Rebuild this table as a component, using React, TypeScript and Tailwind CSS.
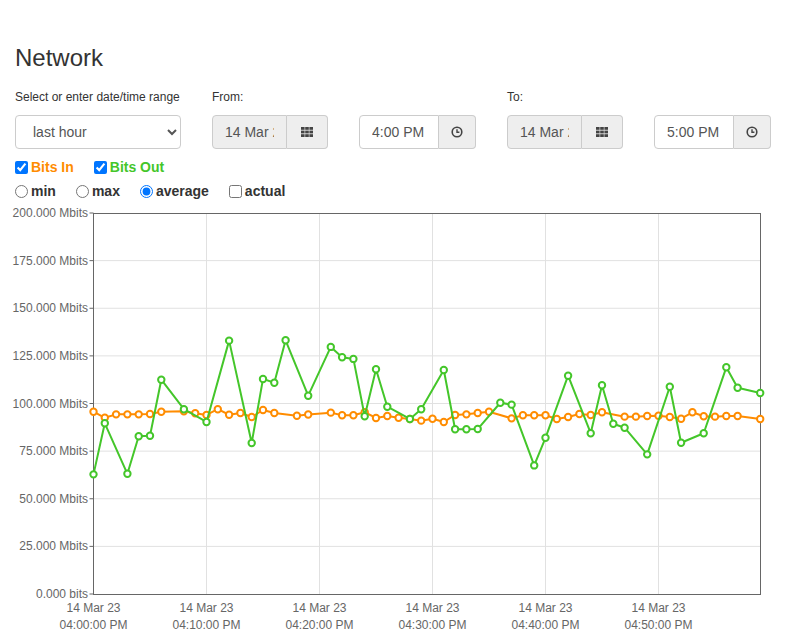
import React from 'react';

type Point = [number, number];

// minute offset from 04:00 PM, value in Mbits
const bitsIn: Point[] = [
  [0, 95.7], [1, 92.5], [2, 94.3], [3, 94.3], [4, 94.3], [5, 94.5], [6, 95.7], [8, 95.9],
  [9, 94.9], [10, 94.0], [11, 97.0], [12, 94.1], [13, 95.0], [14, 92.9], [15, 96.6], [16, 95.0],
  [18, 93.6], [19, 94.2], [21, 95.2], [22, 93.8], [23, 93.8], [24, 95.4], [25, 92.4], [26, 93.4],
  [27, 92.5], [28, 91.9], [29, 91.0], [30, 92.0], [31, 90.3], [32, 94.0], [33, 94.3], [34, 95.0],
  [35, 95.7], [37, 92.2], [38, 93.8], [39, 93.8], [40, 93.8], [41, 91.9], [42, 92.9], [43, 94.5],
  [44, 94.0], [45, 95.4], [47, 93.1], [48, 93.1], [49, 93.4], [50, 93.6], [51, 92.9], [52, 92.0],
  [53, 95.4], [54, 93.3], [55, 93.1], [56, 93.4], [57, 93.4], [59, 91.9],
];

const bitsOut: Point[] = [
  [0, 62.8], [1, 89.6], [3, 63.1], [4, 82.8], [5, 83.1], [6, 112.5], [8, 97.0], [10, 90.3],
  [12, 133.0], [14, 79.3], [15, 112.9], [16, 110.9], [17, 133.2], [19, 104.1], [21, 129.7],
  [22, 124.3], [23, 123.4], [24, 93.3], [25, 118.0], [26, 98.3], [28, 91.9], [29, 97.0],
  [31, 117.6], [32, 86.5], [33, 86.5], [34, 86.6], [36, 100.4], [37, 99.4], [39, 67.5],
  [40, 82.0], [42, 114.6], [44, 84.4], [45, 109.6], [46, 89.4], [47, 87.3], [49, 73.3],
  [51, 108.8], [52, 79.4], [54, 84.4], [56, 119.0], [57, 108.3], [59, 105.5],
];

const LEFT = 93.5;
const RIGHT = 760.5;
const TOP = 12;
const BOTTOM = 393;
const MIN_W = 11.3;

const xOf = (m: number) => LEFT + m * MIN_W;
const yOf = (v: number) => BOTTOM - (v / 200) * (BOTTOM - TOP);

const yTicks = [
  '200.000 Mbits', '175.000 Mbits', '150.000 Mbits', '125.000 Mbits', '100.000 Mbits',
  '75.000 Mbits', '50.000 Mbits', '25.000 Mbits', '0.000 bits',
];
const xTicks = ['04:00:00 PM', '04:10:00 PM', '04:20:00 PM', '04:30:00 PM', '04:40:00 PM', '04:50:00 PM'];

const Series = ({ data, color }: { data: Point[]; color: string }) => (
  <g>
    <polyline
      points={data.map(([m, v]) => `${xOf(m)},${yOf(v)}`).join(' ')}
      fill="none"
      stroke={color}
      strokeWidth={2}
      strokeLinejoin="round"
    />
    {data.map(([m, v]) => (
      <circle key={m} cx={xOf(m)} cy={yOf(v)} r={3.2} fill="#fff" stroke={color} strokeWidth={2} />
    ))}
  </g>
);

const Chart = () => (
  <svg width={787} height={433} className="block" style={{ fontFamily: '"Liberation Sans", Arial, sans-serif' }}>
    {yTicks.map((label, i) => {
      const y = TOP + (i * (BOTTOM - TOP)) / 8;
      return (
        <g key={label}>
          {i > 0 && i < 8 && <line x1={LEFT} x2={RIGHT} y1={y} y2={y} stroke="#e1e1e1" strokeWidth={1} />}
          <line x1={89.5} x2={LEFT} y1={y} y2={y} stroke="#666" strokeWidth={1} />
          <text x={88} y={y + 4} textAnchor="end" fontSize={12} fill="#666">
            {label}
          </text>
        </g>
      );
    })}
    {xTicks.map((label, i) => {
      const x = LEFT + i * 113;
      return (
        <g key={label}>
          {i > 0 && <line x1={x} x2={x} y1={TOP} y2={BOTTOM} stroke="#e1e1e1" strokeWidth={1} />}
          <text x={x} y={411} textAnchor="middle" fontSize={12} fill="#666">
            14 Mar 23
          </text>
          <text x={x} y={428} textAnchor="middle" fontSize={12} fill="#666">
            {label}
          </text>
        </g>
      );
    })}
    <rect x={LEFT} y={TOP + 0.5} width={RIGHT - LEFT} height={BOTTOM - TOP} fill="none" stroke="#666" strokeWidth={1} />
    <Series data={bitsIn} color="#ff8c00" />
    <Series data={bitsOut} color="#44c62a" />
  </svg>
);

const GridIcon = () => (
  <svg width={12} height={10} viewBox="0 0 12 10" fill="#444">
    {[0, 4.2, 8.4].map((x) =>
      [0, 3.6, 7.2].map((y) => <rect key={`${x}-${y}`} x={x} y={y} width={3.6} height={2.8} />)
    )}
  </svg>
);

const ClockIcon = () => (
  <svg width={12} height={12} viewBox="0 0 12 12" fill="none" stroke="#444">
    <circle cx={6} cy={6} r={4.8} strokeWidth={1.6} />
    <path d="M6 3.2V6.3H8.4" strokeWidth={1.4} />
  </svg>
);

const DateGroup = () => (
  <div className="flex h-[34px]">
    <input
      readOnly
      value="14 Mar 23"
      className="w-[75px] border border-[#ccc] bg-[#eee] rounded-l-[4px] px-[12px] text-[14px] text-[#555] outline-none"
    />
    <span className="w-[41px] flex items-center justify-center border border-l-0 border-[#ccc] bg-[#eee] rounded-r-[4px]">
      <GridIcon />
    </span>
  </div>
);

const TimeGroup = ({ value }: { value: string }) => (
  <div className="flex h-[34px]">
    <input
      readOnly
      value={value}
      className="w-[80px] border border-[#ccc] bg-white rounded-l-[4px] px-[12px] text-[14px] text-[#555] outline-none"
    />
    <span className="w-[37px] flex items-center justify-center border border-l-0 border-[#ccc] bg-[#eee] rounded-r-[4px]">
      <ClockIcon />
    </span>
  </div>
);

export default function App() {
  return (
    <div className="bg-white text-[#333] font-['Liberation_Sans',Arial,sans-serif] w-[787px] h-[634px] overflow-hidden">
      <div className="px-[15px] pt-[45px]">
        <h3 className="text-[24px] leading-[26px] font-normal">Network</h3>

        <div className="flex gap-[31px] mt-[18px]">
          <div className="w-[166px]">
            <div className="text-[12px] leading-[17px] mb-[9px]">Select or enter date/time range</div>
            <select
              defaultValue="hour"
              className="w-[166px] h-[34px] border border-[#ccc] rounded-[4px] bg-white pl-[13px] pr-[6px] text-[14px] text-[#555] outline-none"
            >
              <option value="hour">last hour</option>
              <option value="day">last day</option>
              <option value="week">last week</option>
            </select>
          </div>
          <div>
            <div className="text-[12px] leading-[17px] mb-[9px]">From:</div>
            <div className="flex gap-[31px]">
              <DateGroup />
              <TimeGroup value="4:00 PM" />
            </div>
          </div>
          <div>
            <div className="text-[12px] leading-[17px] mb-[9px]">To:</div>
            <div className="flex gap-[31px]">
              <DateGroup />
              <TimeGroup value="5:00 PM" />
            </div>
          </div>
        </div>

        <div className="flex gap-[20px] mt-[8px] h-[20px] items-center text-[14px] font-bold">
          <label className="flex items-center gap-[3px] text-[#ff8c00]">
            <input type="checkbox" defaultChecked className="m-0 w-[13px] h-[13px]" />
            Bits In
          </label>
          <label className="flex items-center gap-[3px] text-[#44c62a]">
            <input type="checkbox" defaultChecked className="m-0 w-[13px] h-[13px]" />
            Bits Out
          </label>
        </div>

        <div className="flex gap-[20px] mt-[4px] h-[20px] items-center text-[14px] font-bold">
          <label className="flex items-center gap-[3px]">
            <input type="radio" name="agg" className="m-0 w-[13px] h-[13px]" />
            min
          </label>
          <label className="flex items-center gap-[3px]">
            <input type="radio" name="agg" className="m-0 w-[13px] h-[13px]" />
            max
          </label>
          <label className="flex items-center gap-[3px]">
            <input type="radio" name="agg" defaultChecked className="m-0 w-[13px] h-[13px]" />
            average
          </label>
          <label className="flex items-center gap-[3px]">
            <input type="checkbox" className="m-0 w-[13px] h-[13px]" />
            actual
          </label>
        </div>
      </div>

      <Chart />
    </div>
  );
}
